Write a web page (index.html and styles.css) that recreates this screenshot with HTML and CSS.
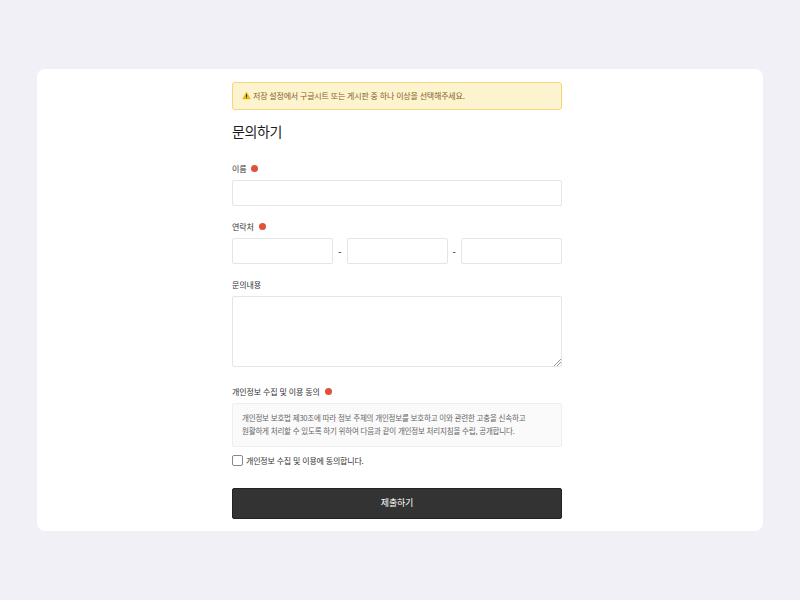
FILE: index.html
```html
<!DOCTYPE html>
<html lang="ko">

<head>
    <meta charset="utf-8">
    <title>문의하기</title>
    <link rel="stylesheet" href="styles.css">
</head>

<body>
    <div class="card">
        <form class="form">
            <div class="notice">
                <svg class="notice-icon" viewBox="0 0 12 12" width="9" height="9">
                    <path d="M6 .8 11.7 11H.3Z" fill="#e8b90f"/>
                    <rect x="5.4" y="4.2" width="1.2" height="3.8" fill="#222"/>
                    <rect x="5.4" y="8.7" width="1.2" height="1.2" fill="#222"/>
                </svg>
                <span>저장 설정에서 구글시트 또는 게시판 중 하나 이상을 선택해주세요.</span>
            </div>
            <h1 class="title">문의하기</h1>

            <div class="field field-name">
                <label class="label">이름 <i class="dot"></i></label>
                <input class="input" type="text">
            </div>

            <div class="field field-phone">
                <label class="label">연락처 <i class="dot"></i></label>
                <div class="phone">
                    <input class="input" type="text">
                    <span class="dash">-</span>
                    <input class="input" type="text">
                    <span class="dash">-</span>
                    <input class="input" type="text">
                </div>
            </div>

            <div class="field field-message">
                <label class="label">문의내용</label>
                <textarea class="input textarea"></textarea>
            </div>

            <div class="field field-privacy">
                <label class="label">개인정보 수집 및 이용 동의 <i class="dot"></i></label>
                <div class="terms">
                    개인정보 보호법 제30조에 따라 정보 주체의 개인정보를 보호하고 이와 관련한 고충을 신속하고<br>
                    원활하게 처리할 수 있도록 하기 위하여 다음과 같이 개인정보 처리지침을 수립, 공개합니다.
                </div>
            </div>

            <label class="agree">
                <input class="check" type="checkbox">
                <span>개인정보 수집 및 이용에 동의합니다.</span>
            </label>

            <button class="submit" type="button">제출하기</button>
        </form>
    </div>
</body>

</html>
```

FILE: styles.css
```css
html,
body {
    margin: 0;
    height: 100%;
}

body {
    background: #f0f0f6;
    font-family: "Noto Sans CJK KR", "Noto Sans", sans-serif;
    color: #222;
    padding: 69px 37px 0;
    box-sizing: border-box;
}

.card {
    height: 462px;
    background: #fff;
    border-radius: 8px;
    padding-top: 13px;
    box-sizing: border-box;
}

.form {
    width: 330px;
    margin-left: 195px;
}

.notice {
    height: 28px;
    box-sizing: border-box;
    display: flex;
    align-items: center;
    gap: 2px;
    padding: 0 0 2px 9px;
    background: #fdf3cf;
    border: 1px solid #f6d477;
    border-radius: 3px;
    font-size: 8px;
    letter-spacing: -0.2px;
    color: #7d6523;
}

.notice-icon {
    flex: none;
}

.title {
    margin: 11px 0 0;
    font-size: 14px;
    letter-spacing: -0.4px;
    line-height: 20px;
    font-weight: 400;
    color: #1c1c1c;
}

.field-name {
    margin-top: 22px;
}

.field-phone {
    margin-top: 15px;
}

.field-message {
    margin-top: 15px;
}

.field-privacy {
    margin-top: 19px;
}

.label {
    display: flex;
    align-items: center;
    gap: 5px;
    height: 10px;
    font-size: 8px;
    letter-spacing: -0.15px;
    color: #333;
    margin-bottom: 7px;
}

.dot {
    width: 7px;
    height: 7px;
    border-radius: 50%;
    background: #e0503c;
}

.input {
    display: block;
    width: 100%;
    height: 26px;
    box-sizing: border-box;
    margin: 0;
    background: #fff;
    border: 1px solid #e5e5e5;
    border-radius: 2px;
    outline: none;
}

.phone {
    display: flex;
    align-items: center;
}

.phone .input {
    flex: 1;
    width: 101px;
    min-width: 0;
}

.dash {
    width: 13.5px;
    flex: none;
    text-align: center;
    font-size: 10px;
    color: #333;
}

.textarea {
    height: 71px;
    padding: 0;
}

.textarea::-webkit-resizer {
    background: linear-gradient(135deg, transparent 45%, #999 45%, #999 55%, transparent 55%, transparent 68%, #999 68%, #999 78%, transparent 78%) no-repeat right bottom / 7px 7px;
}

.terms {
    height: 44px;
    box-sizing: border-box;
    padding: 7px 9px 0;
    background: #fafafa;
    border: 1px solid #eee;
    border-radius: 2px;
    font-size: 7.5px;
    letter-spacing: -0.2px;
    line-height: 13px;
    color: #666;
}

.agree {
    display: flex;
    align-items: center;
    gap: 3px;
    margin-top: 7px;
    height: 12px;
    font-size: 8px;
    letter-spacing: -0.2px;
    color: #333;
}

.check {
    appearance: none;
    width: 11px;
    height: 11px;
    margin: 0;
    background: #fff;
    border: 1px solid #888;
    border-radius: 2px;
}

.submit {
    display: block;
    width: 100%;
    height: 31px;
    margin-top: 22px;
    padding: 0 0 2px;
    background: #333;
    border: 1px solid #222;
    border-radius: 2px;
    color: #fff;
    font-family: inherit;
    font-size: 9px;
    letter-spacing: -0.2px;
}
```
